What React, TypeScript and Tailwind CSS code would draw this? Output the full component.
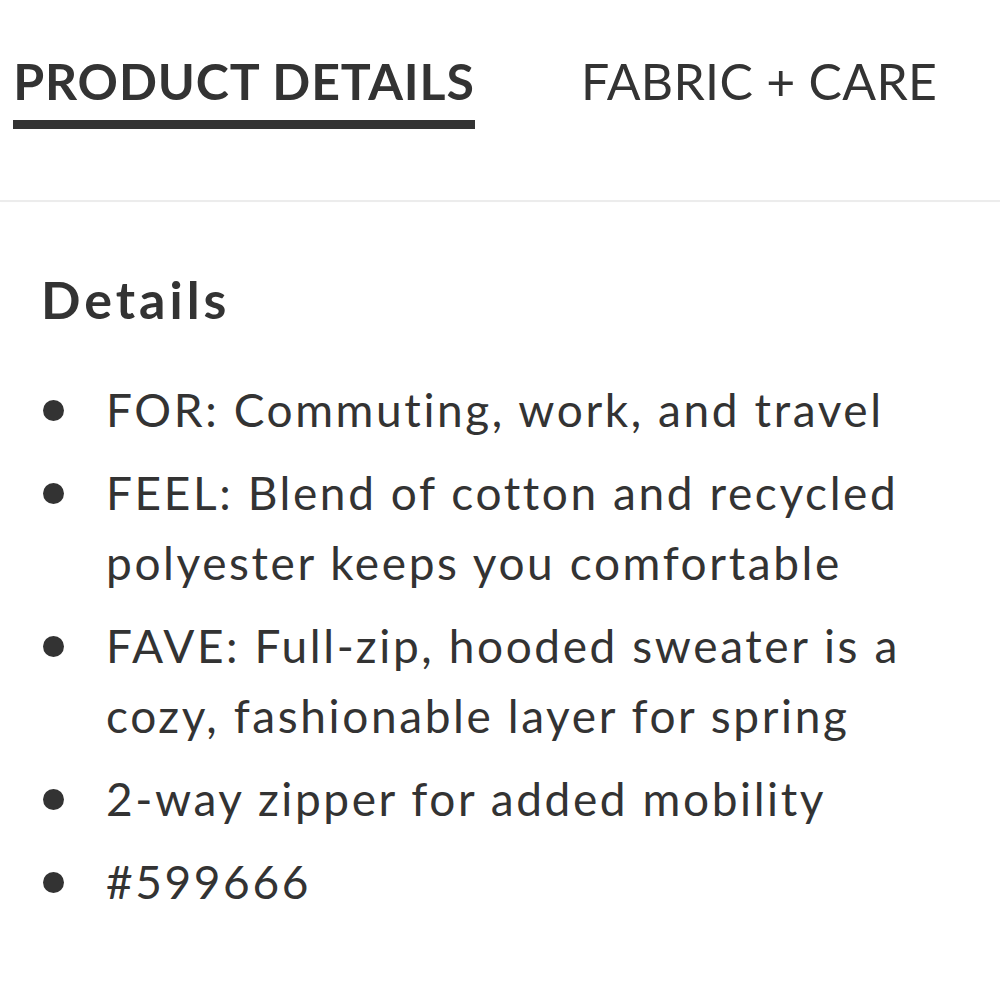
import React from "react";

const items: React.ReactNode[] = [
  <>FOR: Commuting, work, and travel</>,
  <>
    FEEL: Blend of cotton and recycled
    <br />
    polyester keeps you comfortable
  </>,
  <>
    FAVE: Full-zip, hooded sweater is a
    <br />
    cozy, fashionable layer for spring
  </>,
  <>2-way zipper for added mobility</>,
  <>#599666</>,
];

export default function App() {
  return (
    <div
      className="w-[1000px] h-[1000px] bg-white text-[#333333] overflow-hidden"
      style={{ fontFamily: "Lato, 'Noto Sans', sans-serif" }}
    >
      <div className="flex items-start pl-[13px] pt-[50px] h-[202px] border-b-2 border-[#ececec] shadow-[0_-1px_3px_rgba(0,0,0,0.03)]">
        <div className="flex flex-col w-[462px]">
          <div className="text-[50px] leading-[62px] font-bold text-center whitespace-nowrap tracking-[0.9px]">PRODUCT DETAILS</div>
          <div className="h-[9px] bg-[#333333] mt-[8px]"></div>
        </div>
        <div className="ml-[106px] text-[50px] leading-[62px] font-normal whitespace-nowrap tracking-[0.3px]">FABRIC + CARE</div>
      </div>
      <div className="pl-[41px] pt-[65px]">
        <h2 className="text-[52px] leading-[64px] font-bold tracking-[4px]">Details</h2>
        <ul className="mt-[44px] flex flex-col gap-[13px]">
          {items.map((it, i) => (
            <li key={i} className="flex items-start">
              <span className="w-[21px] h-[21px] rounded-full bg-[#333333] mt-[25px] ml-[2px] shrink-0"></span>
              <span className="ml-[42px] text-[46px] leading-[70px] whitespace-nowrap tracking-[2.6px]">{it}</span>
            </li>
          ))}
        </ul>
      </div>
    </div>
  );
}
